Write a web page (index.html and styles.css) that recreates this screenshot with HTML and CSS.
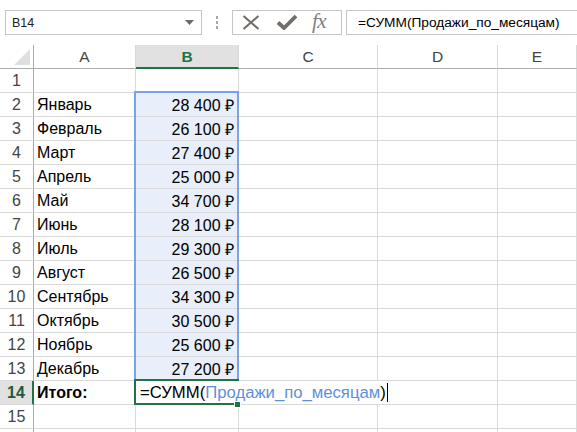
FILE: index.html
```html
<!DOCTYPE html>
<html lang="ru">
<head>
<meta charset="utf-8">
<title>Excel</title>
<link rel="stylesheet" href="styles.css">
</head>
<body>
<div class="topbar">
  <div class="namebox">
    <span class="nb-text">B14</span>
    <svg class="nb-arrow" width="9" height="5" viewBox="0 0 9 5"><polygon points="0,0 9,0 4.5,5" fill="#6a6a6a"/></svg>
  </div>
  <div class="dots"><span></span><span></span><span></span></div>
  <div class="iconbox">
    <svg class="ic-x" width="18" height="15" viewBox="0 0 18 15"><path d="M1.5 1 L16.5 14 M16.5 1 L1.5 14" stroke="#756d67" stroke-width="2.2" fill="none"/></svg>
    <svg class="ic-check" width="20" height="16" viewBox="0 0 20 16"><path d="M1 8.5 L7 14 L19 2" stroke="#756d67" stroke-width="3.8" fill="none" stroke-linejoin="miter"/></svg>
    <span class="ic-fx">fx</span>
  </div>
  <div class="formulabox">=СУММ(Продажи_по_месяцам)</div>
</div>

<div class="sheet">
  <div class="corner"><svg width="16" height="16" viewBox="0 0 16 16"><polygon points="16,0 16,16 0,16" fill="#dfdfdf"/></svg></div>
  <div class="ch">A</div>
  <div class="ch ch-sel">B</div>
  <div class="ch">C</div>
  <div class="ch">D</div>
  <div class="ch">E</div>

  <div class="rh">1</div><div class="c"></div><div class="c"></div><div class="c"></div><div class="c"></div><div class="c"></div>
  <div class="rh">2</div><div class="c">Январь</div><div class="c num sel">28 400 ₽</div><div class="c"></div><div class="c"></div><div class="c"></div>
  <div class="rh">3</div><div class="c">Февраль</div><div class="c num sel">26 100 ₽</div><div class="c"></div><div class="c"></div><div class="c"></div>
  <div class="rh">4</div><div class="c">Март</div><div class="c num sel">27 400 ₽</div><div class="c"></div><div class="c"></div><div class="c"></div>
  <div class="rh">5</div><div class="c">Апрель</div><div class="c num sel">25 000 ₽</div><div class="c"></div><div class="c"></div><div class="c"></div>
  <div class="rh">6</div><div class="c">Май</div><div class="c num sel">34 700 ₽</div><div class="c"></div><div class="c"></div><div class="c"></div>
  <div class="rh">7</div><div class="c">Июнь</div><div class="c num sel">28 100 ₽</div><div class="c"></div><div class="c"></div><div class="c"></div>
  <div class="rh">8</div><div class="c">Июль</div><div class="c num sel">29 300 ₽</div><div class="c"></div><div class="c"></div><div class="c"></div>
  <div class="rh">9</div><div class="c">Август</div><div class="c num sel">26 500 ₽</div><div class="c"></div><div class="c"></div><div class="c"></div>
  <div class="rh">10</div><div class="c">Сентябрь</div><div class="c num sel">34 300 ₽</div><div class="c"></div><div class="c"></div><div class="c"></div>
  <div class="rh">11</div><div class="c">Октябрь</div><div class="c num sel">30 500 ₽</div><div class="c"></div><div class="c"></div><div class="c"></div>
  <div class="rh">12</div><div class="c">Ноябрь</div><div class="c num sel">25 600 ₽</div><div class="c"></div><div class="c"></div><div class="c"></div>
  <div class="rh">13</div><div class="c">Декабрь</div><div class="c num sel">27 200 ₽</div><div class="c"></div><div class="c"></div><div class="c"></div>
  <div class="rh rh-sel">14</div><div class="c bold">Итого:</div><div class="c edit">=СУММ(<span class="ref">Продажи_по_месяцам</span>)<span class="cursor"></span></div><div class="c"></div>
  <div class="rh">15</div><div class="c"></div><div class="c"></div><div class="c"></div><div class="c"></div><div class="c"></div>
  <div class="rh"></div><div class="c"></div><div class="c"></div><div class="c"></div><div class="c"></div><div class="c"></div>

  <div class="range-sel"></div>
  <div class="active-cell"></div>
  <div class="fill-handle"></div>
</div>
</body>
</html>
```

FILE: styles.css
```css
html, body {
  margin: 0;
  padding: 0;
  background: #ffffff;
}
body {
  width: 577px;
  height: 432px;
  overflow: hidden;
  font-family: "Liberation Sans", Arial, sans-serif;
  color: #000;
}

/* ---------- formula bar ---------- */
.topbar {
  height: 45px;
  box-sizing: border-box;
  padding-top: 10px;
  display: flex;
  align-items: flex-start;
}
.namebox {
  margin-left: 5px;
  width: 197px;
  height: 25px;
  box-sizing: border-box;
  border: 1px solid #c6c6c6;
  display: flex;
  align-items: center;
  justify-content: space-between;
  padding-left: 6px;
  padding-right: 7px;
  font-size: 12.5px;
  color: #222;
}
.nb-arrow { display: block; }
.dots {
  margin-left: 14px;
  width: 3px;
  height: 25px;
  display: flex;
  flex-direction: column;
  justify-content: center;
  gap: 2px;
}
.dots span {
  width: 2px;
  height: 3px;
  background: #a8a8a8;
  display: block;
}
.iconbox {
  margin-left: 13px;
  width: 110px;
  height: 25px;
  box-sizing: border-box;
  border: 1px solid #c6c6c6;
  display: flex;
  align-items: center;
  padding-left: 9px;
}
.ic-x { display: block; }
.ic-check { display: block; margin-left: 17px; margin-top: -1px; }
.ic-fx {
  margin-left: 15px;
  font-family: "Liberation Serif", "Times New Roman", serif;
  font-style: italic;
  font-size: 21px;
  color: #7f7f7f;
  line-height: 1;
  margin-top: -2px;
  letter-spacing: -0.5px;
}
.formulabox {
  margin-left: 4px;
  margin-right: -3px;
  flex: 1;
  height: 25px;
  box-sizing: border-box;
  border: 1px solid #c6c6c6;
  display: flex;
  align-items: center;
  padding-left: 11px;
  font-size: 13.7px;
  color: #000;
  white-space: nowrap;
}

/* ---------- grid ---------- */
.sheet {
  position: relative;
  display: grid;
  grid-template-columns: 34px 102px 103px 139px 120px 1fr;
  grid-auto-rows: 24px;
  font-size: 16px;
}
.sheet > div {
  box-sizing: border-box;
}
.corner {
  border-right: 1px solid #ababab;
  border-bottom: 1px solid #ababab;
  display: flex;
  align-items: flex-end;
  justify-content: flex-end;
  padding: 0 3px 3px 0;
}
.corner svg { display: block; }
.ch {
  border-right: 1px solid #d8d8d8;
  border-bottom: 1px solid #ababab;
  display: flex;
  align-items: center;
  justify-content: center;
  color: #444;
  font-size: 15.5px;
  padding-top: 1px;
}
.ch-sel {
  background: #e1e1e1;
  border-bottom: 2px solid #217346;
  color: #217346;
  font-weight: bold;
  padding-top: 2px;
}
.rh {
  border-right: 1px solid #ababab;
  border-bottom: 1px solid #dadada;
  display: flex;
  align-items: center;
  justify-content: center;
  color: #444;
  font-size: 16px;
}
.rh-sel {
  background: #e1e1e1;
  border-right: 2px solid #217346;
  color: #21593a;
  font-weight: bold;
}
.c {
  border-right: 1px solid #dadada;
  border-bottom: 1px solid #dadada;
  display: flex;
  align-items: center;
  padding-left: 3px;
  padding-right: 4px;
  white-space: nowrap;
}
.num { justify-content: flex-end; }
.sel { background: #e8eefa; }
.bold { font-weight: bold; }
.edit {
  grid-column: span 3;
  overflow: visible;
  padding-left: 4px;
  font-size: 16.7px;
}
.ref { color: #5e8fdc; }
.cursor {
  display: inline-block;
  width: 1px;
  height: 19px;
  background: #000;
  margin-left: 1px;
}

/* overlays */
.range-sel {
  position: absolute;
  left: 134px;
  top: 46px;
  width: 105px;
  height: 290px;
  box-sizing: border-box;
  border: 2px solid #7aa1ea;
  pointer-events: none;
}
.active-cell {
  position: absolute;
  left: 134px;
  top: 334px;
  width: 105px;
  height: 26px;
  box-sizing: border-box;
  border: 2px solid #217346;
  border-right: none;
  pointer-events: none;
}
.fill-handle {
  position: absolute;
  left: 234px;
  top: 356px;
  width: 7px;
  height: 7px;
  box-sizing: border-box;
  background: #217346;
  border: 1px solid #fff;
  pointer-events: none;
}
```
